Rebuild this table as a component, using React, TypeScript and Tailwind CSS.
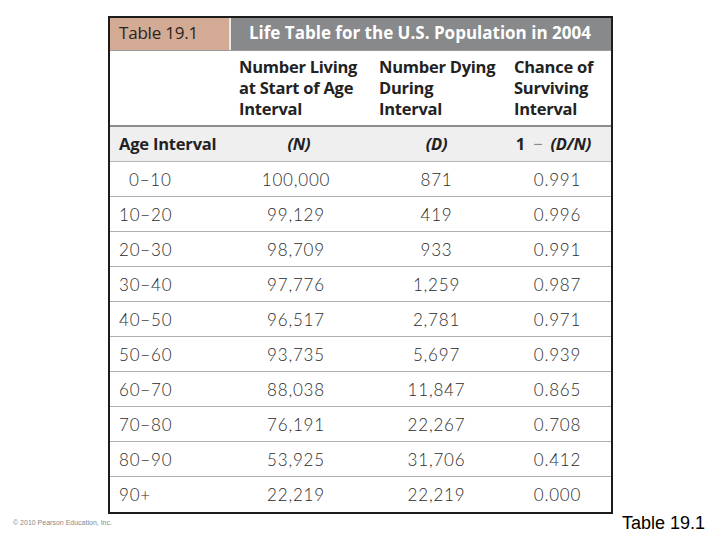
const rows = [
  ["0−10", "100,000", "871", "0.991"],
  ["10−20", "99,129", "419", "0.996"],
  ["20−30", "98,709", "933", "0.991"],
  ["30−40", "97,776", "1,259", "0.987"],
  ["40−50", "96,517", "2,781", "0.971"],
  ["50−60", "93,735", "5,697", "0.939"],
  ["60−70", "88,038", "11,847", "0.865"],
  ["70−80", "76,191", "22,267", "0.708"],
  ["80−90", "53,925", "31,706", "0.412"],
  ["90+", "22,219", "22,219", "0.000"],
];

const cols = "grid grid-cols-[119px_140px_135px_107px]";

export default function App() {
  return (
    <div className="w-[720px] h-[540px] bg-white relative overflow-hidden">
      <div className="pt-[16px] pl-[108px]">
        <div className="w-[505px] border-2 border-[#1c1c1c] bg-white font-['Open_Sans',sans-serif]">
          {/* title bar */}
          <div className={`${cols} h-[33px] border-b border-[#9a9a9a]`}>
            <div className="bg-[#d3ab94] text-[#2a2320] text-[17px] leading-[30px] pl-[9px] tracking-[-0.2px]">
              Table 19.1
            </div>
            <div className="col-span-3 bg-[#88898b] text-white font-bold text-[17px] leading-[30px] pl-[18px] border-l-2 border-[#e8e8e8]">
              Life Table for the U.S. Population in 2004
            </div>
          </div>

          {/* column headings */}
          <div className={`${cols} h-[76px] border-b-2 border-[#8c8c8c] text-[#222] font-bold text-[16.5px] leading-[21px] tracking-[-0.25px]`}>
            <div />
            <div className="pl-[10px] pt-[5px]">Number Living<br />at Start of Age<br />Interval</div>
            <div className="pl-[10px] pt-[5px]">Number Dying<br />During<br />Interval</div>
            <div className="pl-[10px] pt-[5px]">Chance of<br />Surviving<br />Interval</div>
          </div>

          {/* symbol row */}
          <div className={`${cols} h-[35px] bg-[#efeff0] border-b border-[#b5b5b5] text-[#222] font-bold text-[16.5px] leading-[33px] tracking-[-0.2px]`}>
            <div className="pl-[9px]">Age Interval</div>
            <div className="text-center italic">(N)</div>
            <div className="text-center italic">(D)</div>
            <div className="text-center pr-[8px]">1 <span className="font-normal text-[#888] px-[4px]">−</span> <span className="italic">(D/N)</span></div>
          </div>

          {/* data rows */}
          <div className="font-['Lato',sans-serif] font-light text-[17px] tracking-[0.8px] text-[#2b2b2b]">
            {rows.map((r, i) => (
              <div
                key={r[0]}
                className={`${cols} h-[35px] leading-[36px] ${i < rows.length - 1 ? "border-b border-[#b0b0b0]" : ""}`}
              >
                <div className={i === 0 ? "pl-[19px]" : "pl-[9px]"}>{r[0]}</div>
                <div className="text-center pr-[6px]">{r[1]}</div>
                <div className="text-center">{r[2]}</div>
                <div className="text-center">{r[3]}</div>
              </div>
            ))}
          </div>
        </div>
      </div>

      <div className="flex justify-between items-center pl-[13px] pr-[15px] h-[16px] mt-[1px]">
        <span className="font-['Liberation_Sans',sans-serif] text-[7px] text-[#888]">© 2010 Pearson Education, Inc.</span>
        <span className="font-['Liberation_Sans',sans-serif] text-[18px] text-black">Table 19.1</span>
      </div>
    </div>
  );
}
